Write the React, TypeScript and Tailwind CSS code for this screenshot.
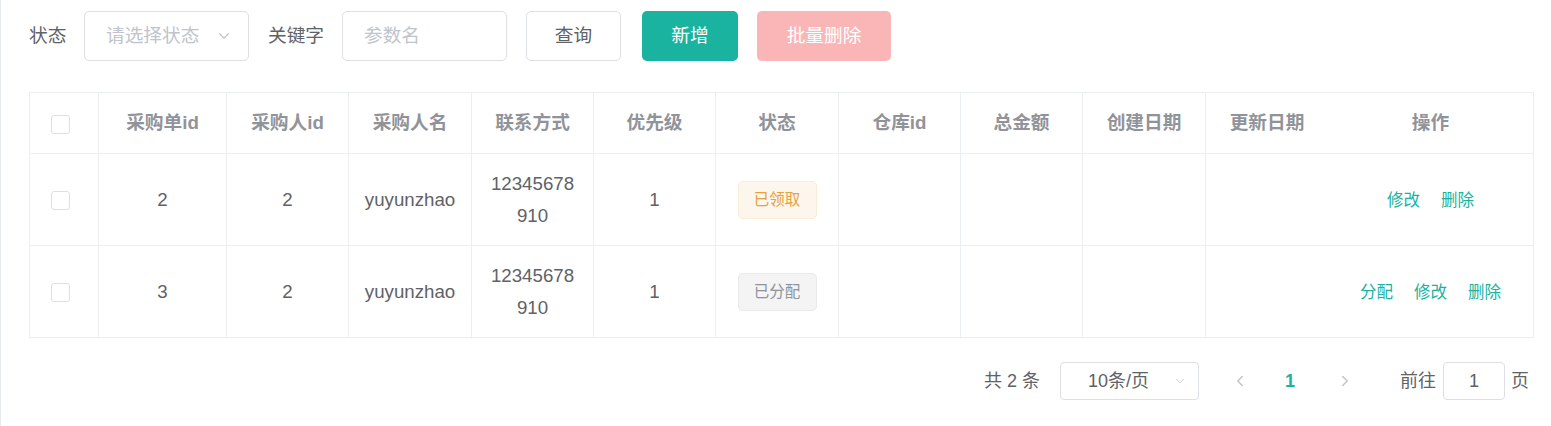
import { ChevronDown, ChevronLeft, ChevronRight } from "lucide-react"

const font = "font-['Liberation_Sans','Noto_Sans_CJK_SC',sans-serif]"

const columns = [
  { key: "check", label: "", width: 69 },
  { key: "orderId", label: "采购单id", width: 128 },
  { key: "buyerId", label: "采购人id", width: 122 },
  { key: "buyerName", label: "采购人名", width: 123 },
  { key: "phone", label: "联系方式", width: 122 },
  { key: "priority", label: "优先级", width: 122 },
  { key: "status", label: "状态", width: 123 },
  { key: "storeId", label: "仓库id", width: 122 },
  { key: "amount", label: "总金额", width: 122 },
  { key: "created", label: "创建日期", width: 123 },
  { key: "updated", label: "更新日期", width: 122 },
  { key: "ops", label: "操作", width: 206 },
]

const rows = [
  { orderId: 2, buyerId: 2, buyerName: "yuyunzhao", phone: "12345678910", priority: 1, status: "received", ops: ["修改", "删除"] },
  { orderId: 3, buyerId: 2, buyerName: "yuyunzhao", phone: "12345678910", priority: 1, status: "assigned", ops: ["分配", "修改", "删除"] },
]

function Checkbox() {
  return <span className="inline-block w-[19px] h-[19px] rounded-[3px] border border-[#dcdfe6] bg-white align-middle" />
}

function StatusTag({ status }: { status: string }) {
  if (status === "received") {
    return (
      <span className="inline-flex items-center justify-center w-[79px] h-[38px] rounded-[5px] border border-[#faecd8] bg-[#fdf6ec] text-[#e6a23c] text-[15.5px]">
        已领取
      </span>
    )
  }
  return (
    <span className="inline-flex items-center justify-center w-[79px] h-[38px] rounded-[5px] border border-[#e9e9eb] bg-[#f4f4f5] text-[#909399] text-[15.5px]">
      已分配
    </span>
  )
}

function cellBorder(key: string) {
  return key === "updated" ? "border-b border-[#ebeef5]" : "border-b border-r border-[#ebeef5]"
}

export default function App() {
  return (
    <div className={`${font} h-[426px] bg-white border-l border-[#e6e9f0] pl-[28px] pr-[17px] text-[#606266]`}>
      {/* Search bar */}
      <div className="flex items-center pt-[11px] h-[61px] text-[18.7px]">
        <span className="w-[55px]">状态</span>
        <div className="flex items-center justify-between w-[165px] h-[50px] rounded-[5px] border border-[#dcdfe6] pl-[21px] pr-[15px] text-[#c0c4cc]">
          <span>请选择状态</span>
          <ChevronDown className="w-[18px] h-[18px]" strokeWidth={1.5} />
        </div>
        <span className="ml-[19px] w-[74px]">关键字</span>
        <div className="flex items-center w-[165px] h-[50px] rounded-[5px] border border-[#dcdfe6] px-[21px] text-[#c0c4cc]">
          参数名
        </div>
        <button className="ml-[19px] w-[95px] h-[50px] rounded-[5px] border border-[#dcdfe6] bg-white text-[#606266]">
          查询
        </button>
        <button className="ml-[21px] w-[96px] h-[50px] rounded-[5px] bg-[#1ab39f] text-white">
          新增
        </button>
        <button className="ml-[19px] w-[134px] h-[50px] rounded-[5px] bg-[#fab6b6] text-white">
          批量删除
        </button>
      </div>

      {/* Table */}
      <table className="mt-[31px] table-fixed border-separate border-spacing-0 border-t border-l border-[#ebeef5] w-[1505px] text-[18.7px]">
        <colgroup>
          {columns.map((c) => (
            <col key={c.key} style={{ width: c.width }} />
          ))}
        </colgroup>
        <thead>
          <tr className="h-[61px]">
            {columns.map((c) => (
              <th
                key={c.key}
                className={`${cellBorder(c.key)} p-0 font-bold text-[#909399] ${c.key === "check" ? "text-left pl-[21px]" : "text-center"}`}
              >
                {c.key === "check" ? <Checkbox /> : c.label}
              </th>
            ))}
          </tr>
        </thead>
        <tbody>
          {rows.map((r) => (
            <tr key={r.orderId} className="h-[92px] leading-[32px]">
              <td className={`${cellBorder("check")} pl-[21px]`}>
                <Checkbox />
              </td>
              <td className={`${cellBorder("orderId")} text-center`}>{r.orderId}</td>
              <td className={`${cellBorder("buyerId")} text-center`}>{r.buyerId}</td>
              <td className={`${cellBorder("buyerName")} text-center`}>{r.buyerName}</td>
              <td className={`${cellBorder("phone")} text-center px-[16px] break-all`}>{r.phone}</td>
              <td className={`${cellBorder("priority")} text-center`}>{r.priority}</td>
              <td className={`${cellBorder("status")} text-center`}>
                <StatusTag status={r.status} />
              </td>
              <td className={cellBorder("storeId")} />
              <td className={cellBorder("amount")} />
              <td className={cellBorder("created")} />
              <td className={cellBorder("updated")} />
              <td className={`${cellBorder("ops")} text-center`}>
                <div className="flex items-center justify-center gap-[21px] text-[16.5px] text-[#1ab39f]">
                  {r.ops.map((o) => (
                    <span key={o}>{o}</span>
                  ))}
                </div>
              </td>
            </tr>
          ))}
        </tbody>
      </table>

      {/* Pagination */}
      <div className="flex items-center justify-end mt-[24px] mr-[5px] h-[38px] text-[18px] text-[#606266]">
        <span className="whitespace-pre">共 2 条</span>
        <div className="ml-[20px] flex items-center justify-between w-[139px] h-[38px] rounded-[4px] border border-[#dcdfe6] pl-[27px] pr-[11px]">
          <span>10条/页</span>
          <ChevronDown className="w-[14px] h-[14px] text-[#c0c4cc]" strokeWidth={1.5} />
        </div>
        <div className="ml-[21px] flex items-center">
          <span className="w-[40px] flex justify-center text-[#c0c4cc]">
            <ChevronLeft className="w-[18px] h-[18px]" strokeWidth={2} />
          </span>
          <span className="w-[60px] text-center font-bold text-[#1ab39f]">1</span>
          <span className="ml-[5px] w-[40px] flex justify-center text-[#c0c4cc]">
            <ChevronRight className="w-[18px] h-[18px]" strokeWidth={2} />
          </span>
        </div>
        <span className="ml-[35px]">前往</span>
        <div className="ml-[7px] flex items-center justify-center w-[62px] h-[38px] rounded-[4px] border border-[#dcdfe6]">
          1
        </div>
        <span className="ml-[6px]">页</span>
      </div>
    </div>
  )
}
